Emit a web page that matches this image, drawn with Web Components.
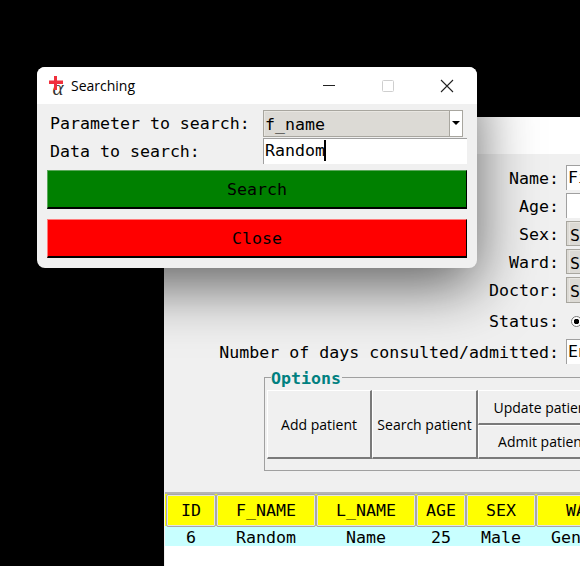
<!DOCTYPE html>
<html>
<head>
<meta charset="utf-8">
<title>Searching</title>
<style>
    html, body { margin: 0; height: 100%; background: #000; overflow: hidden; }
    body { font-family: "DejaVu Sans Mono", monospace; font-size: 16.6px; color: #000; }
</style>
</head>
<body>

<main-window>
    <patient-form></patient-form>
    <options-box></options-box>
    <patient-table></patient-table>
</main-window>

<search-dialog></search-dialog>

<script>
// Campos tipo Tk
class TkEntry extends HTMLElement {
    constructor() {
        super();
        this.attachShadow({ mode: 'open' });
        this.shadowRoot.innerHTML = `
            <style>
                :host {
                    display: block;
                    box-sizing: border-box;
                    height: 25px;
                    background: #fff;
                    border-top: 1px solid #a0a0a0;
                    border-left: 1px solid #a0a0a0;
                    padding-left: 1px;
                    line-height: 24px;
                    white-space: nowrap;
                    overflow: hidden;
                }
                i { display: inline-block; width: 2px; height: 21px; background: #000; vertical-align: -5px; margin-left: -1px; }
            </style>
            <slot></slot>${this.hasAttribute('caret') ? '<i></i>' : ''}`;
    }
}

class TkCombo extends HTMLElement {
    constructor() {
        super();
        this.attachShadow({ mode: 'open' });
        this.shadowRoot.innerHTML = `
            <style>
                :host {
                    display: flex;
                    box-sizing: border-box;
                    height: 27px;
                    background: #dcdad5;
                    border: 1px solid #a8a69f;
                    line-height: 25px;
                    white-space: nowrap;
                    overflow: hidden;
                }
                .value { flex: 1; border: 1px solid #e8e6e1; border-width: 1px 0 0 1px; }
                .arrow {
                    width: 12px;
                    background: #fff;
                    border-left: 1px solid #a8a69f;
                    display: flex;
                    align-items: center;
                    justify-content: center;
                }
            </style>
            <div class="value"><slot></slot></div>
            ${this.hasAttribute('arrow') ? '<div class="arrow"><svg width="8" height="4"><path d="M0 0h8L4 4z" fill="#000"/></svg></div>' : ''}`;
    }
}

class TkButton extends HTMLElement {
    constructor() {
        super();
        this.attachShadow({ mode: 'open' });
        this.shadowRoot.innerHTML = `
            <style>
                :host {
                    display: flex;
                    align-items: center;
                    justify-content: center;
                    box-sizing: border-box;
                    height: 39px;
                    background: var(--bg);
                    border: 1px solid;
                    border-color: var(--light) #000 #000 var(--light);
                    border-bottom-width: 2px;
                }
            </style>
            <slot></slot>`;
    }
}

class OptionButton extends HTMLElement {
    constructor() {
        super();
        this.attachShadow({ mode: 'open' });
        this.shadowRoot.innerHTML = `
            <style>
                :host {
                    display: flex;
                    align-items: center;
                    justify-content: center;
                    box-sizing: border-box;
                    background: #f0f0f0;
                    border: 1px solid;
                    border-color: #fff #7a7a7a #7a7a7a #fff;
                    border-width: 1px 2px 2px 1px;
                    font-family: "Open Sans", "Noto Sans", sans-serif;
                    font-size: 14px;
                    white-space: nowrap;
                    overflow: hidden;
                }
            </style>
            <slot></slot>`;
    }
}

// Diálogo de búsqueda
class SearchDialog extends HTMLElement {
    constructor() {
        super();
        this.attachShadow({ mode: 'open' });
        this.shadowRoot.innerHTML = `
            <style>
                :host {
                    position: absolute;
                    left: 37px;
                    top: 67px;
                    width: 440px;
                    height: 201px;
                    background: #f0f0f0;
                    border-radius: 8px;
                    overflow: hidden;
                    box-shadow: 0 18px 60px rgba(0, 0, 0, .6);
                    display: block;
                }
                .title {
                    height: 37px;
                    background: #fff;
                    display: flex;
                    align-items: center;
                    font: 14px "Open Sans", "Noto Sans", sans-serif;
                }
                .title svg.logo { margin: 0 5px 0 11px; }
                .spacer { flex: 1; }
                .ctl { width: 59px; display: flex; justify-content: center; align-items: center; }
                .body { padding: 5px 10px 0; }
                .grid {
                    display: grid;
                    grid-template-columns: 216px 204px;
                    height: 55px;
                    grid-template-rows: 29px 26px;
                    align-items: center;
                }
                .grid span { padding-left: 3px; white-space: pre; }
                tk-combo { width: 200px; margin-top: -1px; }
                tk-entry { height: 26px; }
                .btns { display: flex; flex-direction: column; gap: 10px; margin-top: 6px; }
                tk-button.go { --bg: #008000; --light: #5aa85a; }
                tk-button.stop { --bg: #ff0000; --light: #ff7a7a; }
            </style>
            <div class="title">
                <svg class="logo" width="18" height="20" viewBox="0 0 18 20">
                    <text x="4.500" y="18.500" font-family="Liberation Serif, serif" font-style="italic" font-size="21" fill="#333">α</text>
                    <path d="M6 0h3v4.500h6V8H9v6H6V8H1V4.500h5z" fill="#f0303c"/>
                </svg>
                <span>Searching</span>
                <span class="spacer"></span>
                <span class="ctl"><svg width="12" height="2"><path d="M0 .5h12" stroke="#222" fill="none"/></svg></span>
                <span class="ctl"><svg width="12" height="12"><rect x=".5" y=".5" width="11" height="11" rx="1" fill="none" stroke="#cfcfcf"/></svg></span>
                <span class="ctl" style="width:60px"><svg width="14" height="14"><path d="M1 1l12 12M13 1L1 13" stroke="#222" stroke-width="1.100" fill="none"/></svg></span>
            </div>
            <div class="body">
                <div class="grid">
                    <span>Parameter to search:</span>
                    <tk-combo arrow>f_name</tk-combo>
                    <span>Data to search:</span>
                    <tk-entry caret>Random</tk-entry>
                </div>
                <div class="btns">
                    <tk-button class="go">Search</tk-button>
                    <tk-button class="stop">Close</tk-button>
                </div>
            </div>`;
    }
}

// Ventana principal, detrás del diálogo
class MainWindow extends HTMLElement {
    constructor() {
        super();
        this.attachShadow({ mode: 'open' });
        this.shadowRoot.innerHTML = `
            <style>
                :host {
                    position: absolute;
                    left: 164px;
                    top: 117px;
                    width: 640px;
                    height: 449px;
                    background: #f0f0f0;
                    display: block;
                }
                .title { height: 37px; background: #fff; }
            </style>
            <div class="title"></div>
            <slot></slot>`;
    }
}

class PatientForm extends HTMLElement {
    constructor() {
        super();
        this.attachShadow({ mode: 'open' });
        this.shadowRoot.innerHTML = `
            <style>
                :host {
                    display: grid;
                    grid-template-columns: 395px 60px;
                    column-gap: 7px;
                    grid-template-rows: 25px 25px 25px 25px 26px 30px 25px;
                    row-gap: 3px;
                    padding-top: 11px;
                    align-items: center;
                    white-space: pre;
                }
                span { text-align: right; }
                span.low { padding-top: 2px; }
                tk-combo, tk-entry { align-self: stretch; }
                tk-combo { height: 100%; padding-left: 2px; }
                .status { display: flex; align-items: center; height: 100%; }
                .radio {
                    box-sizing: border-box;
                    width: 11px;
                    height: 11px;
                    border-radius: 50%;
                    border: 1px solid #777;
                    background: radial-gradient(#000 0 2.500px, #fff 3px);
                    margin: 0 0 0 5px;
                }
            </style>
            <span class="low">Name:</span><tk-entry>First</tk-entry>
            <span class="low">Age:</span><tk-entry></tk-entry>
            <span class="low">Sex:</span><tk-combo>Select</tk-combo>
            <span class="low">Ward:</span><tk-combo>Select</tk-combo>
            <span>Doctor:</span><tk-combo>Select</tk-combo>
            <span>Status:</span><div class="status"><div class="radio"></div></div>
            <span class="low">Number of days consulted/admitted:</span><tk-entry>Enter</tk-entry>`;
    }
}

class OptionsBox extends HTMLElement {
    constructor() {
        super();
        this.attachShadow({ mode: 'open' });
        this.shadowRoot.innerHTML = `
            <style>
                :host {
                    display: block;
                    box-sizing: border-box;
                    position: relative;
                    width: 420px;
                    height: 94px;
                    margin: 13px 0 0 100px;
                    border: 1px solid #a0a0a0;
                    padding: 12px 0 0 2px;
                }
                .legend {
                    position: absolute;
                    left: 6px;
                    top: -8px;
                    background: #f0f0f0;
                    padding: 0 1px 0 0;
                    line-height: 18px;
                    font-weight: bold;
                    color: #008080;
                }
                .grid {
                    display: grid;
                    grid-template-columns: 105px 106px 130px 78px;
                    grid-template-rows: 35px 34px;
                }
                .tall { grid-row: span 2; }
            </style>
            <div class="legend">Options</div>
            <div class="grid">
                <option-button class="tall">Add patient</option-button>
                <option-button class="tall">Search patient</option-button>
                <option-button>Update patient</option-button>
                <option-button class="tall"></option-button>
                <option-button>Admit patient</option-button>
            </div>`;
    }
}

class PatientTable extends HTMLElement {
    constructor() {
        super();
        this.attachShadow({ mode: 'open' });
        const cols = [['ID', 50, '6'], ['F_NAME', 100, 'Random'], ['L_NAME', 100, 'Name'], ['AGE', 50, '25'], ['SEX', 70, 'Male'], ['WARD', 100, 'General']];
        const tpl = cols.map(c => c[1] + 'px').join(' ');
        this.shadowRoot.innerHTML = `
            <style>
                :host {
                    display: block;
                    background: #fff;
                    margin: 21px 0 0 1px;
                    height: 74px;
                    border-top: 2px solid #b4b4b4;
                    overflow: hidden;
                }
                .head, .row { display: grid; grid-template-columns: ${tpl}; text-align: center; }
                .head { background: #ff0; padding-left: 1px; height: 32px; }
                .head div {
                    box-sizing: border-box;
                    background: #ff0;
                    border: 1px solid #a8a8a8;
                    border-radius: 2px;
                    box-shadow: inset 0 0 0 1px #e4e4e4;
                    line-height: 31px;
                }
                .row { background: #c8ffff; height: 20px; line-height: 23px; padding-left: 1px; white-space: nowrap; overflow: hidden; }
            </style>
            <div class="head">${cols.map(c => `<div>${c[0]}</div>`).join('')}</div>
            <div class="row">${cols.map(c => `<div>${c[2]}</div>`).join('')}</div>`;
    }
}

customElements.define('tk-entry', TkEntry);
customElements.define('tk-combo', TkCombo);
customElements.define('tk-button', TkButton);
customElements.define('option-button', OptionButton);
customElements.define('search-dialog', SearchDialog);
customElements.define('main-window', MainWindow);
customElements.define('patient-form', PatientForm);
customElements.define('options-box', OptionsBox);
customElements.define('patient-table', PatientTable);
</script>
</body>
</html>
